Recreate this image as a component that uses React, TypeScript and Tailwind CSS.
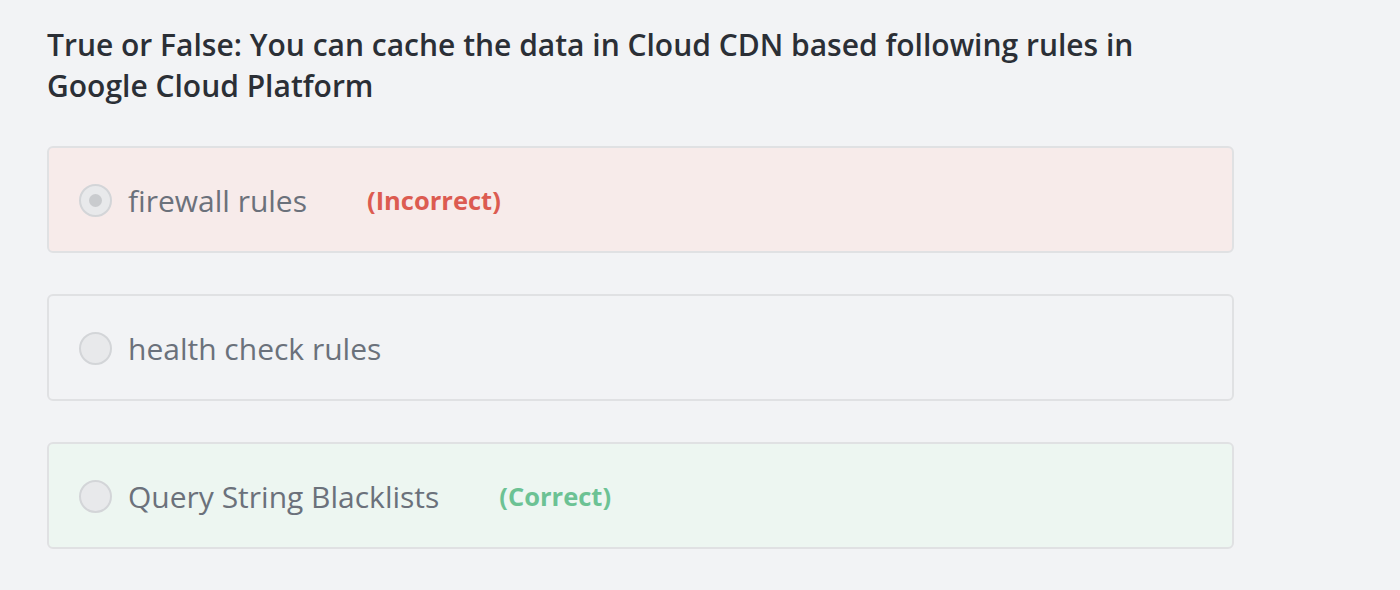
const options = [
    { text: 'firewall rules', state: 'incorrect', checked: true },
    { text: 'health check rules', state: 'none', checked: false },
    { text: 'Query String Blacklists', state: 'correct', checked: false },
];

const Radio = ({ checked }: { checked: boolean }) => (
    <span className="flex h-[33px] w-[33px] shrink-0 items-center justify-center rounded-full border-2 border-[#d3d5d8] bg-[#e8e9eb]">
        {checked && <span className="h-[13px] w-[13px] rounded-full bg-[#c9cbce]" />}
    </span>
);

export default function App() {
    return (
        <div className="min-h-[590px] w-full bg-[#f2f3f5] px-[47px] pt-[24px]" style={{ fontFamily: '"Open Sans", sans-serif' }}>
            <h2 className="w-[1120px] text-[30px] font-semibold leading-[41px] text-[#2b2f36]">
                True or False: You can cache the data in Cloud CDN based following rules in Google Cloud Platform
            </h2>
            <div className="mt-[40px] flex w-[1187px] flex-col gap-[41px]">
                {options.map((o) => (
                    <label
                        key={o.text}
                        className={`flex h-[107px] items-center rounded-[6px] border-2 border-[#e0e1e3] pl-[30px] pt-[2px] ${o.state === 'incorrect' ? 'bg-[#f7ebea]' : o.state === 'correct' ? 'bg-[#edf6f1]' : 'bg-[#f2f3f5]'}`}
                    >
                        <Radio checked={o.checked} />
                        <span className="ml-[16px] text-[30px] text-[#6b717b]">{o.text}</span>
                        {o.state === 'incorrect' && <span className="ml-[60px] text-[25.5px] font-bold text-[#dc5b51]">(Incorrect)</span>}
                        {o.state === 'correct' && <span className="ml-[60px] text-[25.5px] font-bold text-[#6cc294]">(Correct)</span>}
                    </label>
                ))}
            </div>
        </div>
    );
}
